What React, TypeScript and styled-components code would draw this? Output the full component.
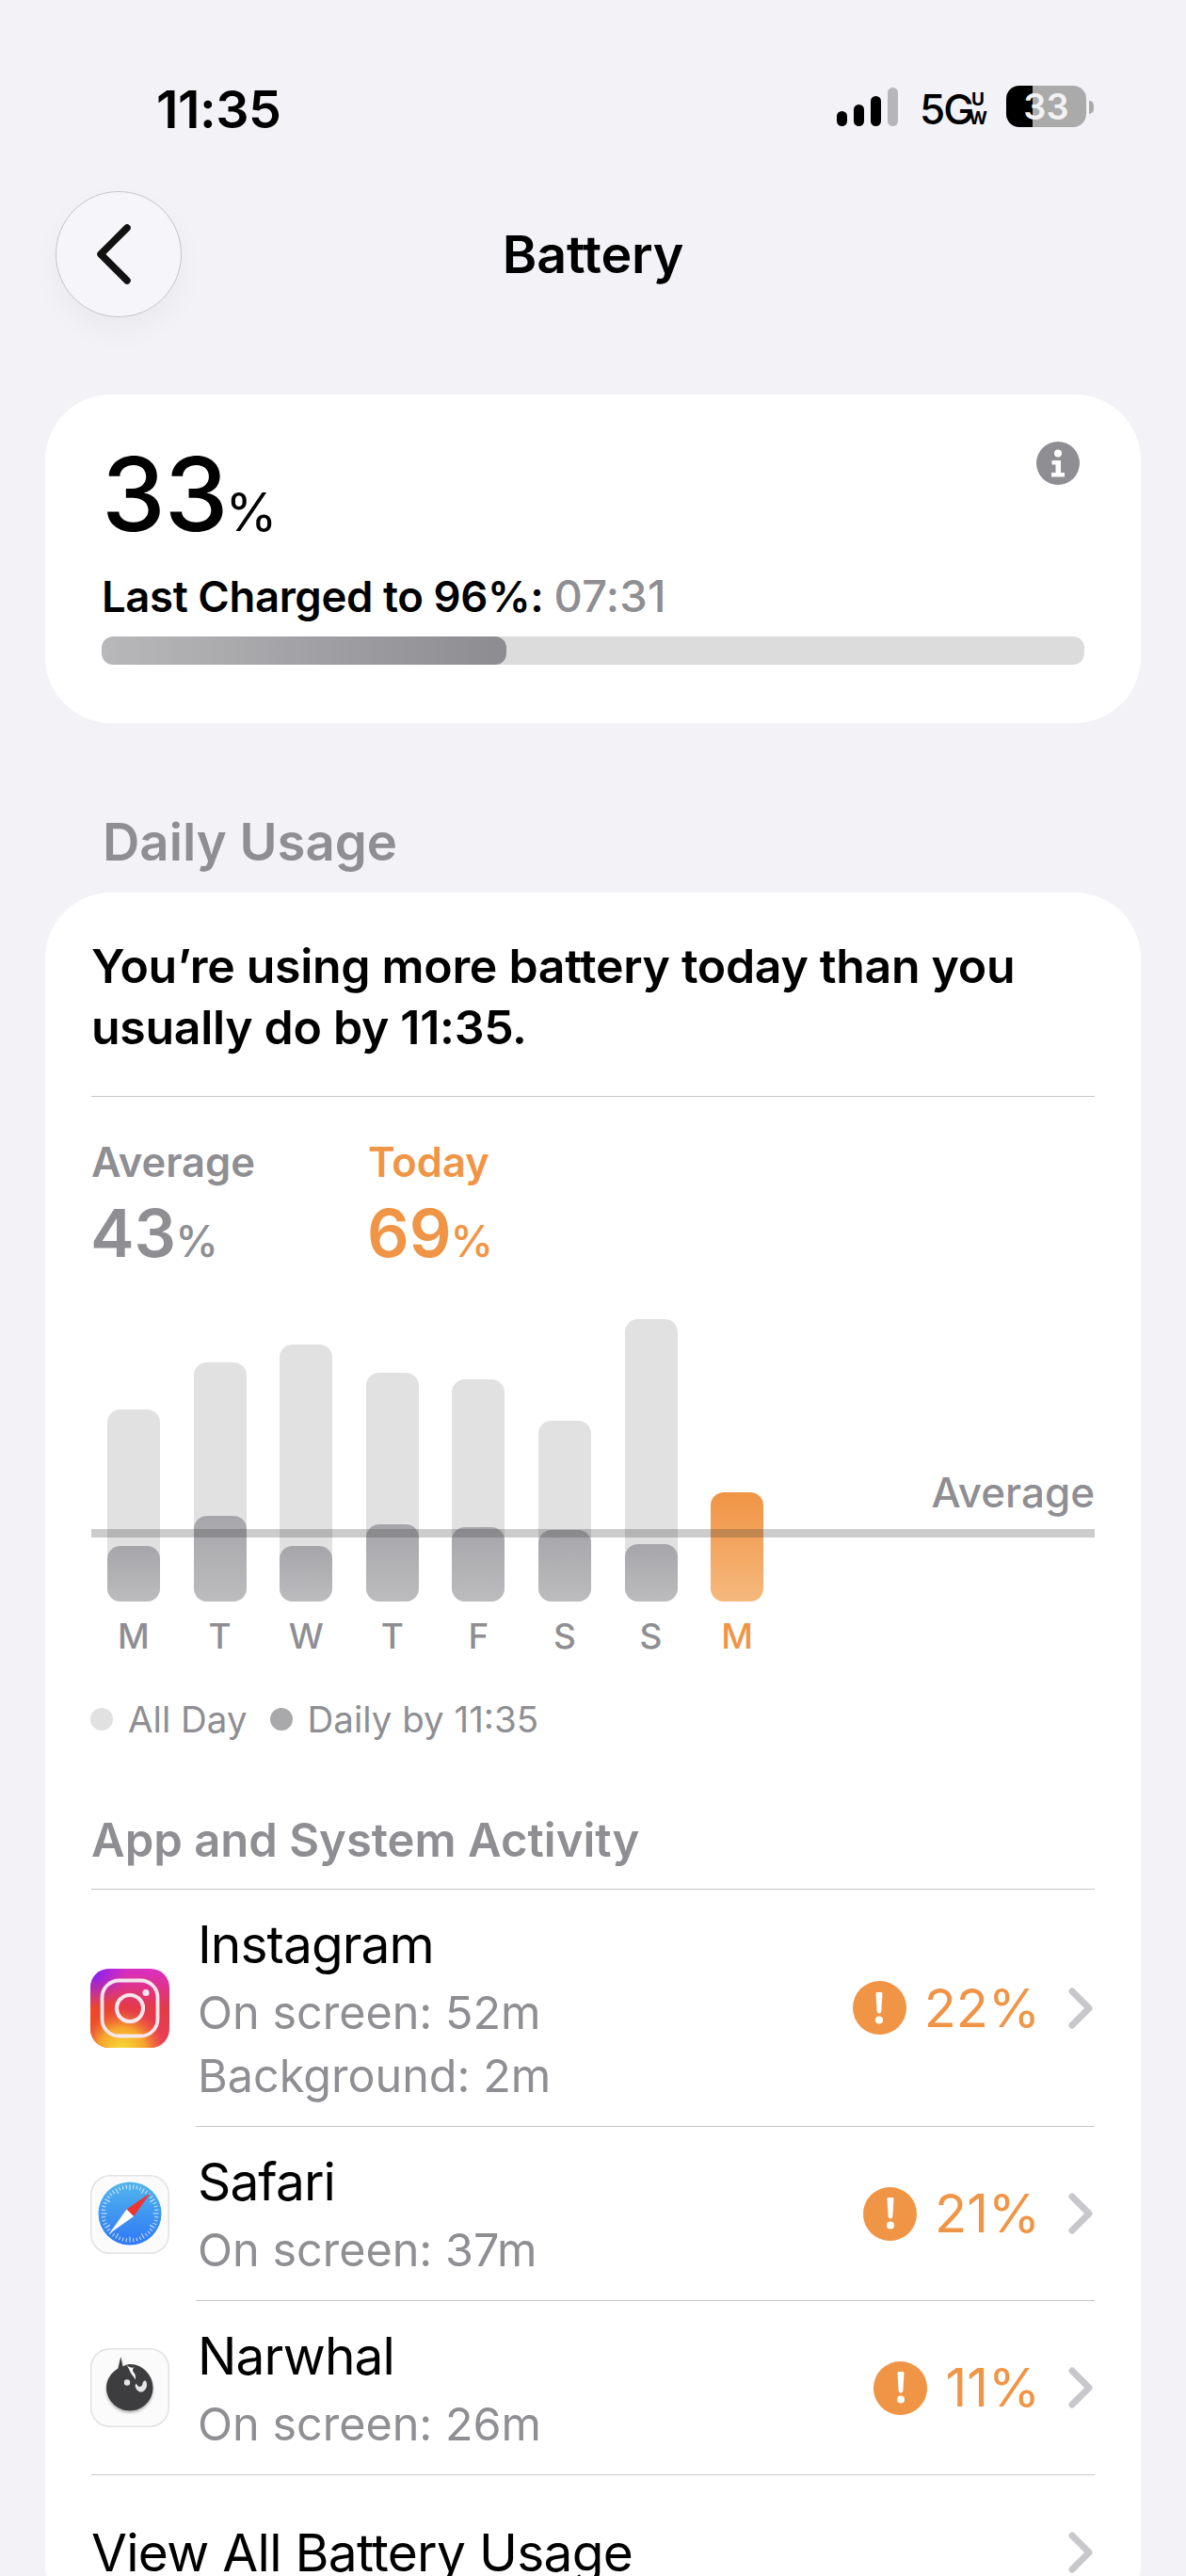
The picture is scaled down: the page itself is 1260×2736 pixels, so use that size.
import React from "react";
import styled, { createGlobalStyle } from "styled-components";

const Global = createGlobalStyle`
  html, body { margin: 0; padding: 0; background: #f2f2f7; }
  body { font-family: Inter, "Liberation Sans", sans-serif; color: #000; -webkit-font-smoothing: antialiased; }
  #root { height: 2736px; overflow: hidden; }
`;

const GREY = "#8e8e93";
const ORANGE = "#f09445";

const Page = styled.div`display: flex; flex-direction: column; background: #f2f2f7;`;

const StatusBar = styled.div`display: flex; align-items: center; justify-content: space-between; padding: 85px 98px 0 166px; height: 62px;`;
const Clock = styled.div`font-size: 55.5px; font-weight: 600; line-height: 60px; letter-spacing: -0.5px;`;
const StatusRight = styled.div`display: flex; align-items: center;`;
const Signal = styled.div`display: flex; align-items: flex-end; gap: 7px; height: 41px; margin-right: 23px; margin-top: -5px;`;
const SignalBar = styled.span<{ $h: number; $off?: boolean }>`width: 11px; height: ${p => p.$h}px; border-radius: 5.5px; background: ${p => (p.$off ? "#b5b5ba" : "#000")};`;
const FiveG = styled.div`width: 50px; white-space: nowrap; font-size: 44px; font-weight: 500; line-height: 44px; letter-spacing: -2px;`;
const UW = styled.div`display: flex; flex-direction: column; align-items: center; width: 18px; margin: 0 21px 0 3px; font-size: 19px; line-height: 20px; font-weight: 700;`;
const Battery = styled.div`width: 85px; height: 44px; border-radius: 14px; background: linear-gradient(90deg, #000 33%, #aaaaaa 33%); color: #f2f2f2; font-size: 38px; font-weight: 600; line-height: 44px; text-align: center; margin-top: -6px;`;
const Nub = styled.span`width: 5px; height: 14px; margin-left: 3px; border-radius: 0 7px 7px 0; background: #aaaaaa; margin-top: -4px;`;

const Nav = styled.div`display: grid; grid-template-columns: 145px 1fr 145px; align-items: center; margin: 56px 48px 0; height: 134px;`;
const BackButton = styled.button`width: 134px; height: 134px; margin-left: 11px; padding: 0; border-radius: 50%; border: 1px solid #c6c6ca; background: #f6f6fa; box-shadow: 0 14px 30px rgba(0, 0, 0, 0.04); display: flex; align-items: center; justify-content: center;`;
const Title = styled.div`font-size: 55.5px; font-weight: 600; line-height: 64px; text-align: center; letter-spacing: -0.2px;`;

const Card = styled.div`background: #fff; margin: 0 48px; border-radius: 70px;`;
const SummaryCard = styled(Card)`margin-top: 82px; height: 349px; padding: 48px 60px 0; box-sizing: border-box;`;
const SummaryTop = styled.div`display: flex; justify-content: space-between; align-items: flex-start;`;
const BigValue = styled.div`font-size: 108px; font-weight: 500; line-height: 116px; letter-spacing: -1px;`;
const BigUnit = styled.span`font-size: 56px; font-weight: 400; margin-left: -2px; letter-spacing: -1px;`;
const InfoWrap = styled.div`margin: 2px 5px 0 0; width: 46px; height: 46px;`;
const Charged = styled.div`font-size: 45.5px; font-weight: 600; line-height: 56px; margin-top: 3px; letter-spacing: -0.4px;`;
const ChargedTime = styled.span`color: ${GREY}; font-weight: 500; font-size: 47px; letter-spacing: 0.3px;`;
const Track = styled.div`height: 30px; margin-top: 14px; border-radius: 12px; background: #dcdcdc; overflow: hidden;`;
const Fill = styled.div`width: 430px; height: 100%; border-radius: 12px; background: linear-gradient(90deg, #b8b8ba, #8c8c91);`;

const SectionHeader = styled.div`margin: 93px 0 0 109px; font-size: 54.5px; font-weight: 600; line-height: 66px; color: ${GREY};`;

const UsageCard = styled(Card)`margin-top: 21px; padding: 46px 49px 0; min-height: 1800px;`;
const Message = styled.div`font-size: 50px; font-weight: 600; line-height: 65px; letter-spacing: -0.3px; padding-bottom: 40px; border-bottom: 1px solid #c6c6c8;`;
const Stats = styled.div`display: flex; gap: 119px; margin-top: 39px;`;
const Stat = styled.div<{ $accent?: boolean }>`color: ${p => (p.$accent ? ORANGE : GREY)}; min-width: 175px;`;
const StatLabel = styled.div`font-size: 43.5px; font-weight: 600; line-height: 60px;`;
const StatValue = styled.div`font-size: 70px; font-weight: 600; line-height: 80px; margin-top: 6px; margin-left: -1px;`;
const StatUnit = styled.span`font-size: 46px; font-weight: 500; margin-left: -1px; letter-spacing: -1px;`;

const Chart = styled.div`position: relative; margin-top: 43px; height: 300px;`;
const Bars = styled.div`display: flex; align-items: flex-end; gap: 35.6px; padding-left: 17px; height: 300px;`;
const BarColumn = styled.div<{ $h: number }>`width: 56px; height: ${p => p.$h}px; border-radius: 14px; background: #e1e1e1; display: flex; flex-direction: column; justify-content: flex-end;`;
const BarInner = styled.div<{ $h: number }>`height: ${p => p.$h}px; border-radius: 14px; background: linear-gradient(180deg, #a6a6aa, #bcbcbe);`;
const TodayBar = styled.div<{ $h: number }>`width: 56px; height: ${p => p.$h}px; border-radius: 14px; background: linear-gradient(180deg, #f09445, #f5b97c);`;
const AvgLine = styled.div`position: absolute; left: 0; right: 0; bottom: 68px; height: 9px; background: rgba(50, 50, 50, 0.25);`;
const AvgLabel = styled.div`position: absolute; right: 0; bottom: 88px; font-size: 44px; font-weight: 500; line-height: 56px; color: ${GREY};`;

const Days = styled.div`display: flex; gap: 35.6px; padding-left: 17px; margin-top: 15px;`;
const Day = styled.div<{ $accent?: boolean }>`width: 56px; text-align: center; font-size: 37px; font-weight: 500; line-height: 44px; color: ${p => (p.$accent ? ORANGE : GREY)};`;

const Legend = styled.div`display: flex; align-items: center; margin: 41px 0 0 -1px; font-size: 38.5px; line-height: 50px; color: ${GREY};`;
const Dot = styled.span<{ $dark?: boolean }>`width: 24px; height: 24px; border-radius: 50%; margin-right: 16px; background: ${p => (p.$dark ? "#a9a9ac" : "#e1e1e1")};`;
const LegendText = styled.span`margin-right: 24px;`;

const ActivityHeader = styled.div`margin-top: 72px; padding-bottom: 19px; font-size: 49px; font-weight: 600; line-height: 64px; color: ${GREY}; border-bottom: 1px solid #c6c6c8;`;

const Row = styled.div`display: flex; align-items: center;`;
const AppIcon = styled.div`width: 84px; height: 84px; margin: 0 28px 0 -1px; flex: none;`;
const RowBody = styled.div<{ $last?: boolean }>`flex: 1; display: flex; align-items: center; justify-content: space-between; padding: 22px 0 20px; border-bottom: ${p => (p.$last ? "0" : "1px solid #c6c6c8")};`;
const AppName = styled.div`font-size: 55px; font-weight: 400; line-height: 72px; margin-left: 2px; letter-spacing: -0.9px;`;
const AppSubs = styled.div`margin: 3px 0 0 2px;`;
const AppSub = styled.div`font-size: 48.5px; line-height: 67px; color: ${GREY};`;
const Trailing = styled.div`display: flex; align-items: center; padding-right: 2px; margin-top: -2px;`;
const Alert = styled.div`width: 57px; height: 57px; border-radius: 50%; background: ${ORANGE}; display: flex; align-items: center; justify-content: center; margin-right: 19px;`;
const Percent = styled.div`font-size: 56px; line-height: 60px; color: ${ORANGE}; margin-right: 30px;`;
const ViewAll = styled.div`display: flex; align-items: center; justify-content: space-between; border-top: 1px solid #c6c6c8; height: 164px; padding-right: 2px; font-size: 55px; line-height: 72px; letter-spacing: -0.7px;`;
const ViewAllText = styled.div`margin-left: 0;`;

const Chevron = () => (
  <svg width="26" height="44" viewBox="0 0 26 44" style={{ flex: "none" }}>
    <path d="M4 4 L22 22 L4 40" fill="none" stroke="#c7c7cc" strokeWidth="7" strokeLinecap="round" strokeLinejoin="round" />
  </svg>
);

const BackChevron = () => (
  <svg width="44" height="70" viewBox="0 0 44 70" style={{ marginLeft: -10 }}>
    <path d="M36 7 L8 35 L36 63" fill="none" stroke="#111" strokeWidth="7.5" strokeLinecap="round" strokeLinejoin="round" />
  </svg>
);

const AlertMark = () => (
  <svg width="10" height="34" viewBox="0 0 10 34">
    <path d="M3 0 h4 a1.5 1.5 0 0 1 1.5 1.6 L7.4 20 a2.4 2.4 0 0 1 -4.8 0 L1.5 1.6 A1.5 1.5 0 0 1 3 0 Z" fill="#fff" />
    <circle cx="5" cy="29.5" r="4" fill="#fff" />
  </svg>
);

const InfoIcon = () => (
  <svg width="46" height="46" viewBox="0 0 46 46">
    <circle cx="23" cy="23" r="23" fill="#8e8e93" />
    <circle cx="23" cy="12.5" r="4" fill="#fff" />
    <path d="M16.5 20 h9.5 v13 h4 v4.5 h-14 v-4.5 h4.5 v-8.5 h-4 z" fill="#fff" />
  </svg>
);

const InstagramIcon = () => (
  <svg width="84" height="84" viewBox="0 0 84 84">
    <defs>
      <linearGradient id="igBase" x1="0" y1="0" x2="0" y2="1">
        <stop offset="0" stopColor="#d92ec4" />
        <stop offset="0.5" stopColor="#e43a48" />
        <stop offset="1" stopColor="#ea3f5a" />
      </linearGradient>
      <radialGradient id="igPurple" cx="0" cy="0" r="0.5">
        <stop offset="0" stopColor="#6a1cff" />
        <stop offset="1" stopColor="#a024e8" stopOpacity="0" />
      </radialGradient>
      <radialGradient id="igOrange" cx="0" cy="0.6" r="0.5">
        <stop offset="0" stopColor="#f04a22" />
        <stop offset="1" stopColor="#f04a22" stopOpacity="0" />
      </radialGradient>
      <radialGradient id="igYellow" cx="0.4" cy="1.05" r="0.55">
        <stop offset="0" stopColor="#f7e13c" />
        <stop offset="0.55" stopColor="#f6a52c" />
        <stop offset="1" stopColor="#f0702c" stopOpacity="0" />
      </radialGradient>
      <clipPath id="igClip">
        <rect width="84" height="84" rx="20" />
      </clipPath>
    </defs>
    <g clipPath="url(#igClip)">
      <rect width="84" height="84" fill="url(#igBase)" />
      <rect width="84" height="84" fill="url(#igOrange)" />
      <rect width="84" height="84" fill="url(#igPurple)" />
      <rect width="84" height="84" fill="url(#igYellow)" />
    </g>
    <rect x="12.5" y="12.5" width="59" height="59" rx="18" fill="none" stroke="#f6e6ee" strokeWidth="3.8" />
    <circle cx="42" cy="42" r="14" fill="none" stroke="#f6e6ee" strokeWidth="4.2" />
    <circle cx="59" cy="25.5" r="3.6" fill="#f6e6ee" />
  </svg>
);

const ticks = Array.from({ length: 48 }, (_, i) => (i * 360) / 48);

const SafariIcon = () => (
  <svg width="84" height="84" viewBox="0 0 84 84">
    <defs>
      <linearGradient id="sfBlue" x1="0" y1="0" x2="0" y2="1">
        <stop offset="0" stopColor="#52b5ec" />
        <stop offset="1" stopColor="#2e78f6" />
      </linearGradient>
    </defs>
    <rect x="0.75" y="0.75" width="82.5" height="82.5" rx="20" fill="#fbfbfb" stroke="#e2e2e2" strokeWidth="1.5" />
    <circle cx="42" cy="41" r="33.5" fill="url(#sfBlue)" />
    {ticks.map(a => (
      <rect key={a} x="41.5" y="10.5" width="1" height={a % 30 === 0 ? 6 : 4} fill="#fff" opacity="0.8" transform={`rotate(${a} 42 41)`} />
    ))}
    <polygon points="64,19 38.5,36.5 46,44" fill="#f0342e" />
    <polygon points="20,62.5 38.5,36.5 46,44" fill="#fff" />
  </svg>
);

const NarwhalIcon = () => (
  <svg width="84" height="84" viewBox="0 0 84 84">
    <defs>
      <filter id="nwShadow" x="-20%" y="-20%" width="140%" height="150%">
        <feDropShadow dx="0" dy="2" stdDeviation="1.6" floodColor="#000" floodOpacity="0.3" />
      </filter>
    </defs>
    <rect x="0.75" y="0.75" width="82.5" height="82.5" rx="20" fill="#fbfbfb" stroke="#e2e2e2" strokeWidth="1.5" />
    <g filter="url(#nwShadow)">
      <path d="M32.3 9 L34.5 19.5 C37 18 39.5 17.3 42 17 C56 17 66.5 29 66.5 42 C66.5 55.5 55.5 66.5 42 66.5 C28.5 66.5 17 55.5 17 42 C17 33 22.5 25.5 29.5 21.5 Z" fill="#3d3d3f" />
    </g>
    <path d="M38 17.5 C40 20 43 21 46.5 20.5 C44 22.5 45 25 47 27 C48 29 48 31 48 33.5 C46 30 43 27 42 24.5 C41 22 40 20 38 17.5 Z" fill="#fbfbfb" />
    <circle cx="39" cy="36.5" r="3.2" fill="#e6e6e6" />
    <path d="M49 37.5 C50 41 53 42 55 39.5 C55.5 36 57 33.5 59 35 C61 38 60 44 56 46 C52 48 48 44 47.5 39.5 Z" fill="#e6e6e6" />
  </svg>
);

const days = [
  { l: "M", h: 204, i: 59 },
  { l: "T", h: 254, i: 91 },
  { l: "W", h: 273, i: 59 },
  { l: "T", h: 243, i: 82 },
  { l: "F", h: 236, i: 79 },
  { l: "S", h: 192, i: 76 },
  { l: "S", h: 300, i: 61 },
];

const apps = [
  { name: "Instagram", subs: ["On screen: 52m", "Background: 2m"], pct: "22%", icon: <InstagramIcon /> },
  { name: "Safari", subs: ["On screen: 37m"], pct: "21%", icon: <SafariIcon /> },
  { name: "Narwhal", subs: ["On screen: 26m"], pct: "11%", icon: <NarwhalIcon /> },
];

export default function App() {
  return (
    <>
      <Global />
      <Page>
        <StatusBar>
          <Clock>11:35</Clock>
          <StatusRight>
            <Signal>
              <SignalBar $h={16} />
              <SignalBar $h={23} />
              <SignalBar $h={32} />
              <SignalBar $h={41} $off />
            </Signal>
            <FiveG>5G</FiveG>
            <UW>
              <span>U</span>
              <span>W</span>
            </UW>
            <Battery>33</Battery>
            <Nub />
          </StatusRight>
        </StatusBar>

        <Nav>
          <BackButton aria-label="Back">
            <BackChevron />
          </BackButton>
          <Title>Battery</Title>
        </Nav>

        <SummaryCard>
          <SummaryTop>
            <BigValue>
              33<BigUnit>%</BigUnit>
            </BigValue>
            <InfoWrap>
              <InfoIcon />
            </InfoWrap>
          </SummaryTop>
          <Charged>
            Last Charged to 96%: <ChargedTime>07:31</ChargedTime>
          </Charged>
          <Track>
            <Fill />
          </Track>
        </SummaryCard>

        <SectionHeader>Daily Usage</SectionHeader>

        <UsageCard>
          <Message>
            You’re using more battery today than you
            <br />
            usually do by 11:35.
          </Message>
          <Stats>
            <Stat>
              <StatLabel>Average</StatLabel>
              <StatValue>
                43<StatUnit>%</StatUnit>
              </StatValue>
            </Stat>
            <Stat $accent>
              <StatLabel>Today</StatLabel>
              <StatValue>
                69<StatUnit>%</StatUnit>
              </StatValue>
            </Stat>
          </Stats>

          <Chart>
            <Bars>
              {days.map((d, i) => (
                <BarColumn key={i} $h={d.h}>
                  <BarInner $h={d.i} />
                </BarColumn>
              ))}
              <TodayBar $h={116} />
            </Bars>
            <AvgLine />
            <AvgLabel>Average</AvgLabel>
          </Chart>
          <Days>
            {days.map((d, i) => (
              <Day key={i}>{d.l}</Day>
            ))}
            <Day $accent>M</Day>
          </Days>

          <Legend>
            <Dot />
            <LegendText>All Day</LegendText>
            <Dot $dark />
            <LegendText>Daily by 11:35</LegendText>
          </Legend>

          <ActivityHeader>App and System Activity</ActivityHeader>

          {apps.map((a, i) => (
            <Row key={a.name}>
              <AppIcon>{a.icon}</AppIcon>
              <RowBody $last={i === apps.length - 1}>
                <div>
                  <AppName>{a.name}</AppName>
                  <AppSubs>
                    {a.subs.map(s => (
                      <AppSub key={s}>{s}</AppSub>
                    ))}
                  </AppSubs>
                </div>
                <Trailing>
                  <Alert>
                    <AlertMark />
                  </Alert>
                  <Percent>{a.pct}</Percent>
                  <Chevron />
                </Trailing>
              </RowBody>
            </Row>
          ))}

          <ViewAll>
            <ViewAllText>View All Battery Usage</ViewAllText>
            <Chevron />
          </ViewAll>
        </UsageCard>
      </Page>
    </>
  );
}
